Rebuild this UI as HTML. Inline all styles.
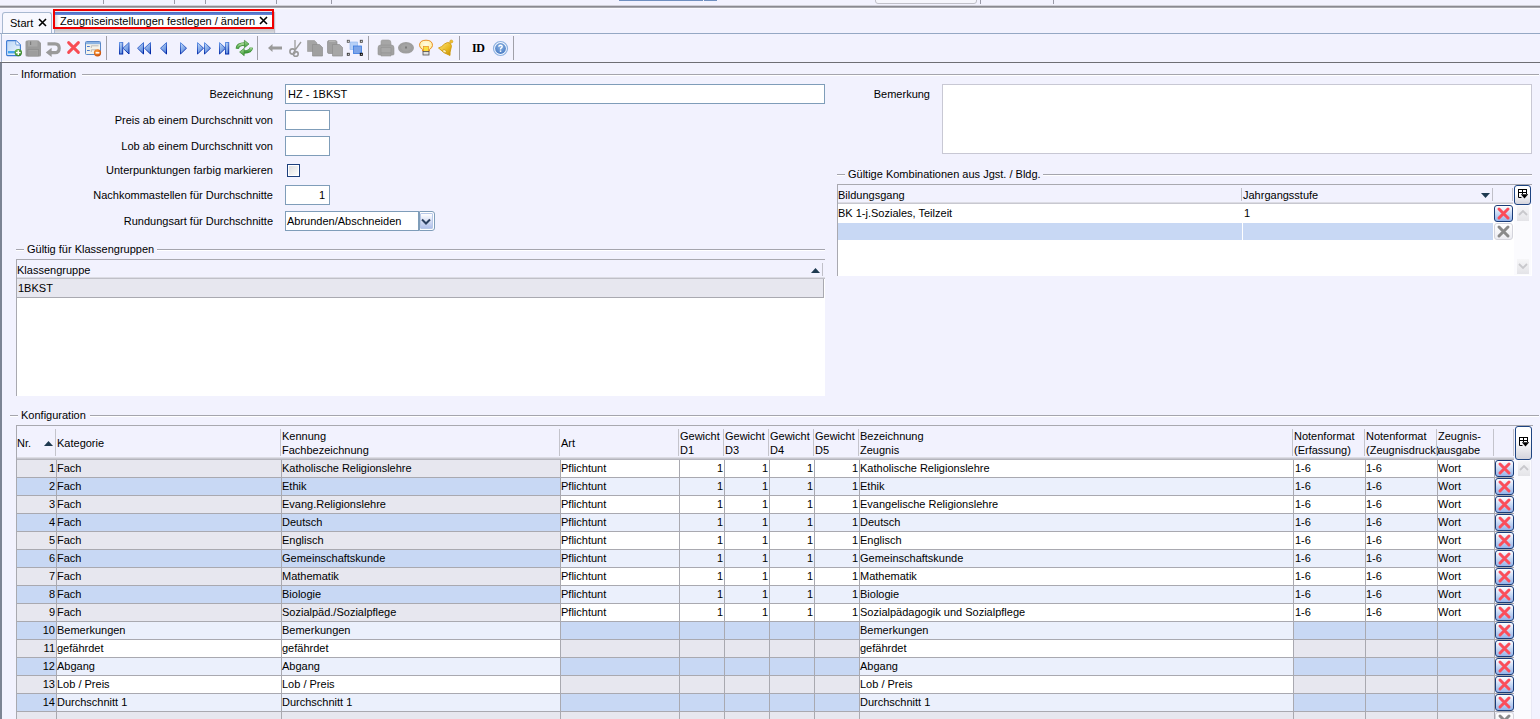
<!DOCTYPE html>
<html><head><meta charset="utf-8"><style>
html,body{margin:0;padding:0;width:1540px;height:719px;overflow:hidden;background:#f2f2fe;}
body>div,body>span,body>svg{position:absolute;}
.t{position:absolute;font-family:"Liberation Sans",sans-serif;font-size:11px;line-height:13px;white-space:nowrap;color:#000000;}
</style></head><body>
<div style="left:103px;top:0px;width:1px;height:4px;background:#9a9aa8"></div>
<div style="left:174px;top:0px;width:1px;height:4px;background:#9a9aa8"></div>
<div style="left:205px;top:0px;width:1px;height:4px;background:#9a9aa8"></div>
<div style="left:276px;top:0px;width:1px;height:4px;background:#9a9aa8"></div>
<div style="left:331px;top:0px;width:1px;height:4px;background:#9a9aa8"></div>
<div style="left:980px;top:0px;width:1px;height:4px;background:#9a9aa8"></div>
<div style="left:1053px;top:0px;width:1px;height:4px;background:#9a9aa8"></div>
<div style="left:619px;top:0px;width:84px;height:1px;background:#7090c0"></div>
<div style="left:704px;top:0px;width:13px;height:1px;background:#7090c0"></div>
<div style="left:875px;top:-4px;width:100px;height:6px;border:1px solid #c0c0c8;border-radius:3px;background:#f6f6fc"></div>
<div style="left:0px;top:5px;width:1540px;height:1px;background:#d0d0d8"></div>
<div style="left:0px;top:6px;width:1540px;height:1px;background:#8a8a90"></div>
<div style="left:0px;top:7px;width:1540px;height:1px;background:#a8a8b0"></div>
<div style="left:0px;top:8px;width:1540px;height:1px;background:#fafafe"></div>
<div style="left:2px;top:12px;width:50px;height:22px;background:#f8f8fe;border:1px solid #a8b8d0;border-bottom:none;border-radius:3px 3px 0 0;box-sizing:border-box"></div>
<span class="t" style="left:10px;top:17px;">Start</span>
<div style="left:54px;top:12px;width:220px;height:22px;background:linear-gradient(#ffffff 0,#ffffff 72%,#c4c4c8 80%,#e4e4ea 100%);border-left:1px solid #a8b8d0;box-sizing:border-box;box-shadow:1px 0 1px rgba(0,0,0,.2)"></div>
<div style="left:55px;top:12px;width:217px;height:3px;background:linear-gradient(#4868c0,#6a8ad8)"></div>
<div style="left:55px;top:15px;width:4px;height:12px;background:linear-gradient(90deg,#d8d8dc,#ffffff)"></div>
<div style="left:53px;top:9px;width:221px;height:20px;border:2px solid #f00000;box-sizing:border-box"></div>
<span class="t" style="left:60px;top:15px;">Zeugniseinstellungen festlegen / ändern</span>
<svg style="left:38px;top:18px" width="9" height="9" viewBox="0 0 9 9"><path d="M1 1L8 8M8 1L1 8" stroke="#000" stroke-width="1.6"/></svg>
<svg style="left:259px;top:16px" width="9" height="9" viewBox="0 0 9 9"><path d="M1 1L8 8M8 1L1 8" stroke="#000" stroke-width="1.6"/></svg>
<div style="left:0px;top:33px;width:1540px;height:1px;background:#95a8c4"></div>
<div style="left:1px;top:34px;width:1539px;height:28px;background:#f2f2fe"></div>
<div style="left:1px;top:33px;width:1px;height:30px;background:#a8b8d0"></div>
<div style="left:2px;top:61px;width:518px;height:1px;background:#ffffff"></div>
<div style="left:2px;top:34px;width:518px;height:1px;background:#ffffff"></div>
<div style="left:0px;top:62px;width:1540px;height:1px;background:#6e6e74"></div>
<div style="left:106px;top:36px;width:1px;height:24px;background:#a0a0a8"></div>
<div style="left:257px;top:36px;width:1px;height:24px;background:#a0a0a8"></div>
<div style="left:368px;top:36px;width:1px;height:24px;background:#a0a0a8"></div>
<div style="left:459px;top:36px;width:1px;height:24px;background:#a0a0a8"></div>
<div style="left:513px;top:36px;width:1px;height:24px;background:#a0a0a8"></div>
<div style="left:0px;top:63px;width:2px;height:656px;background:#7c8494"></div>
<svg style="left:5px;top:39px" width="18" height="18" viewBox="0 0 18 18">
 <defs><linearGradient id="gdoc" x1="0" y1="0" x2="1" y2="1"><stop offset="0" stop-color="#bcd6f6"/><stop offset="1" stop-color="#f2f8fe"/></linearGradient>
 <radialGradient id="ggreen" cx=".4" cy=".35" r=".7"><stop offset="0" stop-color="#80cc64"/><stop offset="1" stop-color="#2a7a20"/></radialGradient></defs>
 <path d="M1.6 2.6Q1.6 1.6 2.6 1.6H11L15.4 6V15.6Q15.4 16.6 14.4 16.6H2.6Q1.6 16.6 1.6 15.6Z" fill="url(#gdoc)" stroke="#3c7ad4" stroke-width="1.1" stroke-linejoin="round"/>
 <path d="M10.8 1.8V5.2Q10.8 6 11.6 6H15.2" fill="#fff" stroke="#5a8ed8" stroke-width=".9"/>
 <rect x="3" y="12" width="7" height="2.4" fill="#44a4ee"/>
 <circle cx="13.3" cy="13.6" r="3.7" fill="url(#ggreen)"/>
 <path d="M13.3 11.3V15.9M11 13.6H15.6" stroke="#fff" stroke-width="1.4"/>
</svg>
<svg style="left:25px;top:40px" width="17" height="17" viewBox="0 0 17 17">
 <path d="M0.5 2Q0.5 0.5 2 0.5H13.5L16 3V15Q16 16.5 14.5 16.5H2Q0.5 16.5 0.5 15Z" fill="#9a9a9a"/>
 <rect x="3" y="0.5" width="9.5" height="6" fill="#a8a8a8"/>
 <rect x="5" y="1.5" width="1.2" height="3.5" fill="#7c7c7c"/>
 <rect x="3" y="9.5" width="10.5" height="6.5" fill="#a4a4a4" stroke="#8c8c8c" stroke-width=".7"/>
 <path d="M4 12H12.5M4 14H12.5" stroke="#929292" stroke-width=".7"/>
</svg>
<svg style="left:45px;top:41px" width="17" height="16" viewBox="0 0 17 16">
 <path d="M2.5 2.8H10Q14.2 2.8 14.2 7.2Q14.2 11.6 10 11.6H6" fill="none" stroke="#9a9a9a" stroke-width="3.2"/>
 <path d="M0.8 11.6L6.6 6.8V16Z" fill="#9a9a9a"/>
</svg>
<svg style="left:66px;top:40px" width="15" height="15" viewBox="0 0 15 15">
 <path d="M2.6 2.6L12.4 12.4M12.4 2.6L2.6 12.4" stroke="#f84c54" stroke-width="2.9" stroke-linecap="round"/>
</svg>
<svg style="left:84px;top:40px" width="18" height="18" viewBox="0 0 18 18">
 <defs><radialGradient id="gorg" cx=".4" cy=".35" r=".7"><stop offset="0" stop-color="#ffa040"/><stop offset="1" stop-color="#c84800"/></radialGradient></defs>
 <rect x="1.5" y="1.5" width="15" height="13" rx="1" fill="#f4f2ea" stroke="#5a88c8" stroke-width="1"/>
 <rect x="2" y="2" width="14" height="2.2" fill="#8ab2e2"/>
 <path d="M3 6.5H5.8M3 10.5H5.8" stroke="#4a7ad0" stroke-width="1.1"/>
 <path d="M7.3 8V5.8H14.5M7.3 12V9.8H12" fill="none" stroke="#b4b4b4" stroke-width=".9"/>
 <circle cx="13.5" cy="12.8" r="3.6" fill="url(#gorg)"/>
 <path d="M11.6 12.8H15.4" stroke="#fff" stroke-width="1.5"/>
</svg>
<svg style="left:118px;top:41px" width="52" height="15" viewBox="0 0 52 15">
 <defs><linearGradient id="gblue" x1="0" y1="0" x2=".6" y2="1"><stop offset="0" stop-color="#c4dcf8"/><stop offset="1" stop-color="#5a88dc"/></linearGradient>
 <linearGradient id="sblue" x1="0" y1="0" x2=".3" y2="1"><stop offset="0" stop-color="#6a9ae8"/><stop offset="1" stop-color="#0028a8"/></linearGradient></defs>
 <rect x="1.5" y="1.5" width="3.2" height="11.5" fill="url(#gblue)" stroke="url(#sblue)" stroke-width="1"/>
 <path d="M11 1.5V13L5 7.2Z" fill="url(#gblue)" stroke="url(#sblue)" stroke-width="1" stroke-linejoin="round"/>
 <path d="M25.5 1.5V13L19.5 7.2Z" fill="url(#gblue)" stroke="url(#sblue)" stroke-width="1" stroke-linejoin="round"/>
 <path d="M32.5 1.5V13L26.5 7.2Z" fill="url(#gblue)" stroke="url(#sblue)" stroke-width="1" stroke-linejoin="round"/>
 <path d="M48.5 1.5V13L42.5 7.2Z" fill="url(#gblue)" stroke="url(#sblue)" stroke-width="1" stroke-linejoin="round"/>
</svg>
<svg style="left:179px;top:41px" width="52" height="15" viewBox="0 0 52 15">
 <path d="M1.5 1.5V13L7.5 7.2Z" fill="url(#gblue)" stroke="url(#sblue)" stroke-width="1" stroke-linejoin="round"/>
 <path d="M18.5 1.5V13L24.5 7.2Z" fill="url(#gblue)" stroke="url(#sblue)" stroke-width="1" stroke-linejoin="round"/>
 <path d="M25.5 1.5V13L31.5 7.2Z" fill="url(#gblue)" stroke="url(#sblue)" stroke-width="1" stroke-linejoin="round"/>
 <path d="M40.5 1.5V13L46.5 7.2Z" fill="url(#gblue)" stroke="url(#sblue)" stroke-width="1" stroke-linejoin="round"/>
 <rect x="46.5" y="1.5" width="3.2" height="11.5" fill="url(#gblue)" stroke="url(#sblue)" stroke-width="1"/>
</svg>
<svg style="left:235px;top:39px" width="18" height="18" viewBox="0 0 18 18">
 <defs><linearGradient id="ggr" x1="0" y1="0" x2="0" y2="1"><stop offset="0" stop-color="#a8dc98"/><stop offset="1" stop-color="#3c9a3a"/></linearGradient></defs>
 <path d="M2.3 9.6Q2.6 5 9.8 5" fill="none" stroke="#3a8a30" stroke-width="3.4"/>
 <path d="M2.3 9.6Q2.6 5 9.8 5" fill="none" stroke="url(#ggr)" stroke-width="2.2"/>
 <path d="M9.4 1.3L14 5L9.4 8.7Z" fill="url(#ggr)" stroke="#3a8a30" stroke-width=".7" stroke-linejoin="round"/>
 <path d="M16.3 8.6Q16 13 8.8 13" fill="none" stroke="#3a8a30" stroke-width="3.4"/>
 <path d="M16.3 8.6Q16 13 8.8 13" fill="none" stroke="url(#ggr)" stroke-width="2.2"/>
 <path d="M9.2 9.3L4.6 13L9.2 16.7Z" fill="url(#ggr)" stroke="#3a8a30" stroke-width=".7" stroke-linejoin="round"/>
</svg>
<svg style="left:267px;top:43px" width="16" height="10" viewBox="0 0 16 10">
 <path d="M1 5L5.5 1V3.5H15V6.5H5.5V9Z" fill="#9a9a9a"/>
</svg>
<svg style="left:288px;top:39px" width="15" height="18" viewBox="0 0 15 18">
 <path d="M7 1V11M13 3L7.5 10.5" stroke="#9c9c9c" stroke-width="1.3" fill="none"/>
 <circle cx="4.5" cy="12.5" r="2.6" fill="none" stroke="#9a9a9a" stroke-width="1.6"/>
 <circle cx="7.8" cy="15" r="2.4" fill="none" stroke="#9a9a9a" stroke-width="1.6"/>
</svg>
<svg style="left:306px;top:39px" width="18" height="18" viewBox="0 0 18 18">
 <path d="M1.5 1.5H8.5L11 4V12.5H1.5Z" fill="#a4a4a4" stroke="#9a9a9a" stroke-width=".6"/>
 <path d="M6.5 5.5H13.5L16.5 8.5V17H6.5Z" fill="#a0a0a0" stroke="#8e8e8e" stroke-width=".7"/>
</svg>
<svg style="left:326px;top:39px" width="18" height="18" viewBox="0 0 18 18">
 <path d="M1.5 3Q1.5 1.5 3 1.5H9Q11 1.5 11 3V14.5H3Q1.5 14.5 1.5 13Z" fill="#a0a0a0" stroke="#8e8e8e" stroke-width=".7"/>
 <path d="M3 1.5H9.5V3H3Z" fill="#b4b4b4"/>
 <path d="M6.5 5.5H13.5L16.5 8.5V17H6.5Z" fill="#a6a6a6" stroke="#8e8e8e" stroke-width=".7"/>
</svg>
<svg style="left:346px;top:39px" width="18" height="18" viewBox="0 0 18 18">
 <rect x="4" y="3" width="7.5" height="7.5" fill="#b8d0f6" stroke="#8ab4f0" stroke-width=".6"/>
 <rect x="7.5" y="7" width="8" height="7.5" fill="#7ca4e8" stroke="#3a7ae0" stroke-width=".8"/>
 <rect x="1.3" y="1.3" width="2" height="2" fill="#fff" stroke="#555" stroke-width=".9"/>
 <rect x="14.3" y="1.3" width="2" height="2" fill="#fff" stroke="#444" stroke-width=".9"/>
 <rect x="1.3" y="14.3" width="2" height="2" fill="#fff" stroke="#333" stroke-width=".9"/>
 <rect x="14.3" y="14.3" width="2" height="2" fill="#fff" stroke="#000" stroke-width="1"/>
</svg>
<svg style="left:377px;top:39px" width="18" height="18" viewBox="0 0 18 18">
 <path d="M4 2.5Q4 1 5.5 1H11.5Q14 1 14 4V8H4Z" fill="#a6a6a6" stroke="#9a9a9a" stroke-width=".6"/>
 <path d="M1 9Q1 6 3.5 6H14.5Q17 6 17 9V15Q17 16 16 16H2Q1 16 1 15Z" fill="#a2a2a2" stroke="#969696" stroke-width=".6"/>
 <path d="M4 8.5H14V14H4Z" fill="#a8a8a8" stroke="#959595" stroke-width=".7"/>
 <path d="M4 14H14V17H4Z" fill="#a4a4a4" stroke="#959595" stroke-width=".6"/>
</svg>
<svg style="left:397px;top:41px" width="18" height="14" viewBox="0 0 18 14">
 <ellipse cx="9" cy="6.8" rx="8" ry="5.8" fill="#9e9e9e"/>
 <ellipse cx="9" cy="6.5" rx="5" ry="3.5" fill="#a4a4a4"/>
 <rect x="8" y="5.5" width="2" height="2" fill="#7a7a7a"/>
</svg>
<svg style="left:418px;top:39px" width="16" height="17" viewBox="0 0 16 17">
 <defs><radialGradient id="gbulb" cx=".5" cy=".4" r=".6"><stop offset="0" stop-color="#fffbe8"/><stop offset=".7" stop-color="#fff2b0"/><stop offset="1" stop-color="#f0c040"/></radialGradient></defs>
 <path d="M8 1.2Q14.5 1.2 14.5 6.5Q14.5 8.5 11.5 10.5V12H4.5V10.5Q1.5 8.5 1.5 6.5Q1.5 1.2 8 1.2Z" fill="url(#gbulb)" stroke="#e8902a" stroke-width="1"/>
 <rect x="5.5" y="7.5" width="5" height="5" fill="#f8e040" stroke="#e89020" stroke-width=".7"/>
 <rect x="5" y="12.5" width="6" height="3.5" fill="#e0e0e0" stroke="#505050" stroke-width=".8"/>
</svg>
<svg style="left:437px;top:39px" width="18" height="18" viewBox="0 0 18 18">
 <defs><linearGradient id="gbell" x1="0" y1="0" x2="1" y2="1"><stop offset="0" stop-color="#ffe680"/><stop offset=".6" stop-color="#e8b820"/><stop offset="1" stop-color="#c08a00"/></linearGradient></defs>
 <path d="M1.5 9Q5 8 7.5 5Q10.5 2.5 13 4Q15.5 6.5 13.8 10Q12.8 13 13 16.5Q7 14.5 1.5 9Z" fill="url(#gbell)" stroke="#d09a10" stroke-width=".9" stroke-linejoin="round"/>
 <circle cx="14.3" cy="2.5" r="1.5" fill="#f0c030" stroke="#d09a10" stroke-width=".6"/>
 <ellipse cx="7.5" cy="12.2" rx="2" ry="1.4" fill="#fff0b0" stroke="#b08000" stroke-width=".5" transform="rotate(35 7.5 12.2)"/>
</svg>
<span class="t" style="left:472px;top:41px;font-family:'Liberation Serif',serif;font-weight:bold;font-size:12px;line-height:14px;letter-spacing:-0.3px">ID</span>
<svg style="left:492px;top:40px" width="17" height="17" viewBox="0 0 17 17">
 <defs><radialGradient id="ghelp" cx=".5" cy=".35" r=".65"><stop offset="0" stop-color="#8cb4e4"/><stop offset="1" stop-color="#4a7cc4"/></radialGradient></defs>
 <circle cx="8.5" cy="8.5" r="7" fill="#f4f8ff" stroke="#8cb0e0" stroke-width="1.2"/>
 <circle cx="8.5" cy="8.5" r="5.4" fill="url(#ghelp)"/>
 <path d="M6.8 6.8Q6.8 5.2 8.5 5.2Q10.2 5.2 10.2 6.6Q10.2 7.5 9.2 8Q8.5 8.4 8.5 9.4" fill="none" stroke="#fff" stroke-width="1.4"/>
 <rect x="7.8" y="10.4" width="1.5" height="1.5" fill="#fff"/>
</svg>

<div style="left:10px;top:74px;width:8px;height:1px;background:#a5a5ad"></div>
<div style="left:10px;top:75px;width:8px;height:1px;background:#ffffff"></div>
<div style="left:82px;top:74px;width:1457px;height:1px;background:#a5a5ad"></div>
<div style="left:82px;top:75px;width:1457px;height:1px;background:#ffffff"></div>
<span class="t" style="left:21px;top:68px;">Information</span>
<span class="t" style="right:1267px;top:88px;">Bezeichnung</span>
<span class="t" style="right:1267px;top:114px;">Preis ab einem Durchschnitt von</span>
<span class="t" style="right:1267px;top:140px;">Lob ab einem Durchschnitt von</span>
<span class="t" style="right:1267px;top:164px;">Unterpunktungen farbig markieren</span>
<span class="t" style="right:1267px;top:189px;">Nachkommastellen für Durchschnitte</span>
<span class="t" style="right:1267px;top:215px;">Rundungsart für Durchschnitte</span>
<div style="left:285px;top:84px;width:540px;height:20px;background:#fff;border:1px solid #7f9db9;box-sizing:border-box"></div>
<span class="t" style="left:288px;top:88px;">HZ - 1BKST</span>
<div style="left:285px;top:110px;width:45px;height:20px;background:#fff;border:1px solid #7f9db9;box-sizing:border-box"></div>
<div style="left:285px;top:136px;width:45px;height:20px;background:#fff;border:1px solid #7f9db9;box-sizing:border-box"></div>
<div style="left:287px;top:164px;width:13px;height:13px;border:1px solid #1c3f7c;box-sizing:border-box;background:linear-gradient(135deg,#dcdcdc,#ffffff);box-shadow:inset 0 0 0 1px #fff"></div>
<div style="left:285px;top:185px;width:45px;height:20px;background:#fff;border:1px solid #7f9db9;box-sizing:border-box"></div>
<span class="t" style="right:1215px;top:189px;">1</span>
<div style="left:285px;top:211px;width:134px;height:20px;background:#fff;border:1px solid #7f9db9;box-sizing:border-box"></div>
<span class="t" style="left:287px;top:215px;">Abrunden/Abschneiden</span>
<div style="left:419px;top:211px;width:16px;height:20px;border:1px solid #7f9db9;border-radius:0 3px 3px 0;box-sizing:border-box;background:#fff"></div>
<div style="left:420px;top:213px;width:13px;height:16px;background:linear-gradient(#ffffff,#b0c0ea);border:1px solid #b8c8e8;box-sizing:border-box;border-radius:1px"></div>
<svg style="left:421px;top:218px" width="10" height="8" viewBox="0 0 10 8"><path d="M1 1.5L5 5.5L9 1.5" stroke="#2c4060" stroke-width="2" fill="none"/></svg>
<span class="t" style="right:610px;top:88px;">Bemerkung</span>
<div style="left:942px;top:84px;width:590px;height:70px;background:#fff;border:1px solid #c8c8d4;box-sizing:border-box"></div>
<div style="left:837px;top:174px;width:8px;height:1px;background:#a5a5ad"></div>
<div style="left:837px;top:175px;width:8px;height:1px;background:#ffffff"></div>
<div style="left:1043px;top:174px;width:489px;height:1px;background:#a5a5ad"></div>
<div style="left:1043px;top:175px;width:489px;height:1px;background:#ffffff"></div>
<span class="t" style="left:848px;top:168px;">Gültige Kombinationen aus Jgst. / Bldg.</span>
<div style="left:837px;top:184px;width:695px;height:92px;background:#fff"></div>
<div style="left:837px;top:184px;width:695px;height:1px;background:#a9a9b0"></div>
<div style="left:837px;top:184px;width:1px;height:92px;background:#a9a9b0"></div>
<div style="left:838px;top:185px;width:676px;height:18px;background:#f2f2fe"></div>
<div style="left:838px;top:203px;width:676px;height:1px;background:#c8c8d0"></div>
<div style="left:838px;top:202px;width:676px;height:1px;background:#dcdce4"></div>
<span class="t" style="left:838px;top:189px;">Bildungsgang</span>
<div style="left:1241px;top:188px;width:1px;height:13px;background:#c0c0c8"></div>
<span class="t" style="left:1243px;top:189px;">Jahrgangsstufe</span>
<div style="left:1492px;top:188px;width:1px;height:13px;background:#c0c0c8"></div>
<div style="left:1513px;top:185px;width:19px;height:19px;background:#f2f2fe"></div>
<div style="left:1512px;top:188px;width:1px;height:13px;background:#c0c0c8"></div>
<svg style="left:1481px;top:193px" width="9" height="5" viewBox="0 0 9 5"><path d="M0 0H9L4.5 5Z" fill="#1e3a50"/></svg>
<span class="t" style="left:838px;top:207px;">BK 1-j.Soziales, Teilzeit</span>
<span class="t" style="left:1244px;top:207px;">1</span>
<div style="left:838px;top:223px;width:655px;height:17px;background:#c8d8f4"></div>
<div style="left:1242px;top:223px;width:1px;height:17px;background:#ffffff"></div>
<div style="left:1514px;top:204px;width:17px;height:71px;background:#fbfbfe"></div>
<div style="left:16px;top:249px;width:8px;height:1px;background:#a5a5ad"></div>
<div style="left:16px;top:250px;width:8px;height:1px;background:#ffffff"></div>
<div style="left:157px;top:249px;width:668px;height:1px;background:#a5a5ad"></div>
<div style="left:157px;top:250px;width:668px;height:1px;background:#ffffff"></div>
<span class="t" style="left:27px;top:243px;">Gültig für Klassengruppen</span>
<div style="left:16px;top:259px;width:809px;height:137px;background:#fff"></div>
<div style="left:16px;top:259px;width:809px;height:1px;background:#a9a9b0"></div>
<div style="left:16px;top:259px;width:1px;height:137px;background:#a9a9b0"></div>
<div style="left:17px;top:260px;width:808px;height:18px;background:#f2f2fe"></div>
<div style="left:17px;top:277px;width:808px;height:1px;background:#dcdce4"></div>
<div style="left:17px;top:278px;width:808px;height:1px;background:#c0c0c8"></div>
<span class="t" style="left:17px;top:264px;">Klassengruppe</span>
<div style="left:822px;top:263px;width:1px;height:13px;background:#c0c0c8"></div>
<svg style="left:811px;top:268px" width="9" height="5" viewBox="0 0 9 5"><path d="M0 5H9L4.5 0Z" fill="#1e3a50"/></svg>
<div style="left:17px;top:279px;width:807px;height:19px;background:#e7e7ef;border-right:1px solid #a9a9b0;border-bottom:1px solid #a9a9b0;box-sizing:border-box"></div>
<span class="t" style="left:18px;top:282px;">1BKST</span>
<div style="left:10px;top:415px;width:8px;height:1px;background:#a5a5ad"></div>
<div style="left:10px;top:416px;width:8px;height:1px;background:#ffffff"></div>
<div style="left:90px;top:415px;width:1449px;height:1px;background:#a5a5ad"></div>
<div style="left:90px;top:416px;width:1449px;height:1px;background:#ffffff"></div>
<span class="t" style="left:21px;top:409px;">Konfiguration</span>
<div style="left:16px;top:425px;width:1517px;height:294px;background:#f2f2fe"></div>
<div style="left:16px;top:425px;width:1517px;height:1px;background:#a9a9b0"></div>
<div style="left:16px;top:425px;width:1px;height:294px;background:#a9a9b0"></div>
<div style="left:17px;top:457px;width:1497px;height:1px;background:#dcdce4"></div>
<div style="left:17px;top:458px;width:1497px;height:1px;background:#c8c8d0"></div>
<span class="t" style="left:17px;top:437px;">Nr.</span>
<span class="t" style="left:57px;top:437px;">Kategorie</span>
<span class="t" style="left:282px;top:430px;">Kennung</span>
<span class="t" style="left:282px;top:444px;">Fachbezeichnung</span>
<span class="t" style="left:561px;top:437px;">Art</span>
<span class="t" style="left:680px;top:430px;">Gewicht</span>
<span class="t" style="left:680px;top:444px;">D1</span>
<span class="t" style="left:725px;top:430px;">Gewicht</span>
<span class="t" style="left:725px;top:444px;">D3</span>
<span class="t" style="left:770px;top:430px;">Gewicht</span>
<span class="t" style="left:770px;top:444px;">D4</span>
<span class="t" style="left:815px;top:430px;">Gewicht</span>
<span class="t" style="left:815px;top:444px;">D5</span>
<span class="t" style="left:860px;top:430px;">Bezeichnung</span>
<span class="t" style="left:860px;top:444px;">Zeugnis</span>
<span class="t" style="left:1294px;top:430px;">Notenformat</span>
<span class="t" style="left:1294px;top:444px;">(Erfassung)</span>
<span class="t" style="left:1366px;top:430px;">Notenformat</span>
<span class="t" style="left:1366px;top:444px;">(Zeugnisdruck)</span>
<span class="t" style="left:1438px;top:430px;">Zeugnis-</span>
<span class="t" style="left:1438px;top:444px;">ausgabe</span>
<div style="left:55px;top:429px;width:1px;height:27px;background:#c4c4cc"></div>
<div style="left:280px;top:429px;width:1px;height:27px;background:#c4c4cc"></div>
<div style="left:559px;top:429px;width:1px;height:27px;background:#c4c4cc"></div>
<div style="left:678px;top:429px;width:1px;height:27px;background:#c4c4cc"></div>
<div style="left:723px;top:429px;width:1px;height:27px;background:#c4c4cc"></div>
<div style="left:768px;top:429px;width:1px;height:27px;background:#c4c4cc"></div>
<div style="left:813px;top:429px;width:1px;height:27px;background:#c4c4cc"></div>
<div style="left:858px;top:429px;width:1px;height:27px;background:#c4c4cc"></div>
<div style="left:1292px;top:429px;width:1px;height:27px;background:#c4c4cc"></div>
<div style="left:1364px;top:429px;width:1px;height:27px;background:#c4c4cc"></div>
<div style="left:1436px;top:429px;width:1px;height:27px;background:#c4c4cc"></div>
<div style="left:1493px;top:429px;width:1px;height:27px;background:#c4c4cc"></div>
<div style="left:1513px;top:429px;width:1px;height:27px;background:#c4c4cc"></div>
<svg style="left:44px;top:441px" width="9" height="5" viewBox="0 0 9 5"><path d="M0 5H9L4.5 0Z" fill="#1e3a50"/></svg>
<div style="left:17px;top:460px;width:39px;height:17px;background:#e7e7ef"></div>
<div style="left:57px;top:460px;width:224px;height:17px;background:#e7e7ef"></div>
<div style="left:282px;top:460px;width:278px;height:17px;background:#e7e7ef"></div>
<div style="left:561px;top:460px;width:118px;height:17px;background:#ffffff"></div>
<div style="left:680px;top:460px;width:44px;height:17px;background:#ffffff"></div>
<div style="left:725px;top:460px;width:44px;height:17px;background:#ffffff"></div>
<div style="left:770px;top:460px;width:44px;height:17px;background:#ffffff"></div>
<div style="left:815px;top:460px;width:44px;height:17px;background:#ffffff"></div>
<div style="left:860px;top:460px;width:433px;height:17px;background:#ffffff"></div>
<div style="left:1294px;top:460px;width:71px;height:17px;background:#ffffff"></div>
<div style="left:1366px;top:460px;width:71px;height:17px;background:#ffffff"></div>
<div style="left:1438px;top:460px;width:56px;height:17px;background:#ffffff"></div>
<div style="left:17px;top:477px;width:1498px;height:1px;background:#a9a9b0"></div>
<div style="left:56px;top:460px;width:1px;height:18px;background:#a9a9b0"></div>
<div style="left:281px;top:460px;width:1px;height:18px;background:#a9a9b0"></div>
<div style="left:560px;top:460px;width:1px;height:18px;background:#a9a9b0"></div>
<div style="left:679px;top:460px;width:1px;height:18px;background:#a9a9b0"></div>
<div style="left:724px;top:460px;width:1px;height:18px;background:#a9a9b0"></div>
<div style="left:769px;top:460px;width:1px;height:18px;background:#a9a9b0"></div>
<div style="left:814px;top:460px;width:1px;height:18px;background:#a9a9b0"></div>
<div style="left:859px;top:460px;width:1px;height:18px;background:#a9a9b0"></div>
<div style="left:1293px;top:460px;width:1px;height:18px;background:#a9a9b0"></div>
<div style="left:1365px;top:460px;width:1px;height:18px;background:#a9a9b0"></div>
<div style="left:1437px;top:460px;width:1px;height:18px;background:#a9a9b0"></div>
<div style="left:1494px;top:460px;width:1px;height:18px;background:#a9a9b0"></div>
<span class="t" style="right:1485px;top:462px;">1</span>
<span class="t" style="left:57px;top:462px;">Fach</span>
<span class="t" style="left:282px;top:462px;">Katholische Religionslehre</span>
<span class="t" style="left:860px;top:462px;">Katholische Religionslehre</span>
<span class="t" style="left:561px;top:462px;">Pflichtunt</span>
<span class="t" style="right:817px;top:462px;">1</span>
<span class="t" style="right:772px;top:462px;">1</span>
<span class="t" style="right:727px;top:462px;">1</span>
<span class="t" style="right:682px;top:462px;">1</span>
<span class="t" style="left:1295px;top:462px;">1-6</span>
<span class="t" style="left:1366px;top:462px;">1-6</span>
<span class="t" style="left:1438px;top:462px;">Wort</span>
<div style="left:17px;top:478px;width:39px;height:17px;background:#c8d8f4"></div>
<div style="left:57px;top:478px;width:224px;height:17px;background:#c8d8f4"></div>
<div style="left:282px;top:478px;width:278px;height:17px;background:#c8d8f4"></div>
<div style="left:561px;top:478px;width:118px;height:17px;background:#ebf0fc"></div>
<div style="left:680px;top:478px;width:44px;height:17px;background:#ebf0fc"></div>
<div style="left:725px;top:478px;width:44px;height:17px;background:#ebf0fc"></div>
<div style="left:770px;top:478px;width:44px;height:17px;background:#ebf0fc"></div>
<div style="left:815px;top:478px;width:44px;height:17px;background:#ebf0fc"></div>
<div style="left:860px;top:478px;width:433px;height:17px;background:#ebf0fc"></div>
<div style="left:1294px;top:478px;width:71px;height:17px;background:#ebf0fc"></div>
<div style="left:1366px;top:478px;width:71px;height:17px;background:#ebf0fc"></div>
<div style="left:1438px;top:478px;width:56px;height:17px;background:#ebf0fc"></div>
<div style="left:17px;top:495px;width:1498px;height:1px;background:#a9a9b0"></div>
<div style="left:56px;top:478px;width:1px;height:18px;background:#a9a9b0"></div>
<div style="left:281px;top:478px;width:1px;height:18px;background:#a9a9b0"></div>
<div style="left:560px;top:478px;width:1px;height:18px;background:#a9a9b0"></div>
<div style="left:679px;top:478px;width:1px;height:18px;background:#a9a9b0"></div>
<div style="left:724px;top:478px;width:1px;height:18px;background:#a9a9b0"></div>
<div style="left:769px;top:478px;width:1px;height:18px;background:#a9a9b0"></div>
<div style="left:814px;top:478px;width:1px;height:18px;background:#a9a9b0"></div>
<div style="left:859px;top:478px;width:1px;height:18px;background:#a9a9b0"></div>
<div style="left:1293px;top:478px;width:1px;height:18px;background:#a9a9b0"></div>
<div style="left:1365px;top:478px;width:1px;height:18px;background:#a9a9b0"></div>
<div style="left:1437px;top:478px;width:1px;height:18px;background:#a9a9b0"></div>
<div style="left:1494px;top:478px;width:1px;height:18px;background:#a9a9b0"></div>
<span class="t" style="right:1485px;top:480px;">2</span>
<span class="t" style="left:57px;top:480px;">Fach</span>
<span class="t" style="left:282px;top:480px;">Ethik</span>
<span class="t" style="left:860px;top:480px;">Ethik</span>
<span class="t" style="left:561px;top:480px;">Pflichtunt</span>
<span class="t" style="right:817px;top:480px;">1</span>
<span class="t" style="right:772px;top:480px;">1</span>
<span class="t" style="right:727px;top:480px;">1</span>
<span class="t" style="right:682px;top:480px;">1</span>
<span class="t" style="left:1295px;top:480px;">1-6</span>
<span class="t" style="left:1366px;top:480px;">1-6</span>
<span class="t" style="left:1438px;top:480px;">Wort</span>
<div style="left:17px;top:496px;width:39px;height:17px;background:#e7e7ef"></div>
<div style="left:57px;top:496px;width:224px;height:17px;background:#e7e7ef"></div>
<div style="left:282px;top:496px;width:278px;height:17px;background:#e7e7ef"></div>
<div style="left:561px;top:496px;width:118px;height:17px;background:#ffffff"></div>
<div style="left:680px;top:496px;width:44px;height:17px;background:#ffffff"></div>
<div style="left:725px;top:496px;width:44px;height:17px;background:#ffffff"></div>
<div style="left:770px;top:496px;width:44px;height:17px;background:#ffffff"></div>
<div style="left:815px;top:496px;width:44px;height:17px;background:#ffffff"></div>
<div style="left:860px;top:496px;width:433px;height:17px;background:#ffffff"></div>
<div style="left:1294px;top:496px;width:71px;height:17px;background:#ffffff"></div>
<div style="left:1366px;top:496px;width:71px;height:17px;background:#ffffff"></div>
<div style="left:1438px;top:496px;width:56px;height:17px;background:#ffffff"></div>
<div style="left:17px;top:513px;width:1498px;height:1px;background:#a9a9b0"></div>
<div style="left:56px;top:496px;width:1px;height:18px;background:#a9a9b0"></div>
<div style="left:281px;top:496px;width:1px;height:18px;background:#a9a9b0"></div>
<div style="left:560px;top:496px;width:1px;height:18px;background:#a9a9b0"></div>
<div style="left:679px;top:496px;width:1px;height:18px;background:#a9a9b0"></div>
<div style="left:724px;top:496px;width:1px;height:18px;background:#a9a9b0"></div>
<div style="left:769px;top:496px;width:1px;height:18px;background:#a9a9b0"></div>
<div style="left:814px;top:496px;width:1px;height:18px;background:#a9a9b0"></div>
<div style="left:859px;top:496px;width:1px;height:18px;background:#a9a9b0"></div>
<div style="left:1293px;top:496px;width:1px;height:18px;background:#a9a9b0"></div>
<div style="left:1365px;top:496px;width:1px;height:18px;background:#a9a9b0"></div>
<div style="left:1437px;top:496px;width:1px;height:18px;background:#a9a9b0"></div>
<div style="left:1494px;top:496px;width:1px;height:18px;background:#a9a9b0"></div>
<span class="t" style="right:1485px;top:498px;">3</span>
<span class="t" style="left:57px;top:498px;">Fach</span>
<span class="t" style="left:282px;top:498px;">Evang.Religionslehre</span>
<span class="t" style="left:860px;top:498px;">Evangelische Religionslehre</span>
<span class="t" style="left:561px;top:498px;">Pflichtunt</span>
<span class="t" style="right:817px;top:498px;">1</span>
<span class="t" style="right:772px;top:498px;">1</span>
<span class="t" style="right:727px;top:498px;">1</span>
<span class="t" style="right:682px;top:498px;">1</span>
<span class="t" style="left:1295px;top:498px;">1-6</span>
<span class="t" style="left:1366px;top:498px;">1-6</span>
<span class="t" style="left:1438px;top:498px;">Wort</span>
<div style="left:17px;top:514px;width:39px;height:17px;background:#c8d8f4"></div>
<div style="left:57px;top:514px;width:224px;height:17px;background:#c8d8f4"></div>
<div style="left:282px;top:514px;width:278px;height:17px;background:#c8d8f4"></div>
<div style="left:561px;top:514px;width:118px;height:17px;background:#ebf0fc"></div>
<div style="left:680px;top:514px;width:44px;height:17px;background:#ebf0fc"></div>
<div style="left:725px;top:514px;width:44px;height:17px;background:#ebf0fc"></div>
<div style="left:770px;top:514px;width:44px;height:17px;background:#ebf0fc"></div>
<div style="left:815px;top:514px;width:44px;height:17px;background:#ebf0fc"></div>
<div style="left:860px;top:514px;width:433px;height:17px;background:#ebf0fc"></div>
<div style="left:1294px;top:514px;width:71px;height:17px;background:#ebf0fc"></div>
<div style="left:1366px;top:514px;width:71px;height:17px;background:#ebf0fc"></div>
<div style="left:1438px;top:514px;width:56px;height:17px;background:#ebf0fc"></div>
<div style="left:17px;top:531px;width:1498px;height:1px;background:#a9a9b0"></div>
<div style="left:56px;top:514px;width:1px;height:18px;background:#a9a9b0"></div>
<div style="left:281px;top:514px;width:1px;height:18px;background:#a9a9b0"></div>
<div style="left:560px;top:514px;width:1px;height:18px;background:#a9a9b0"></div>
<div style="left:679px;top:514px;width:1px;height:18px;background:#a9a9b0"></div>
<div style="left:724px;top:514px;width:1px;height:18px;background:#a9a9b0"></div>
<div style="left:769px;top:514px;width:1px;height:18px;background:#a9a9b0"></div>
<div style="left:814px;top:514px;width:1px;height:18px;background:#a9a9b0"></div>
<div style="left:859px;top:514px;width:1px;height:18px;background:#a9a9b0"></div>
<div style="left:1293px;top:514px;width:1px;height:18px;background:#a9a9b0"></div>
<div style="left:1365px;top:514px;width:1px;height:18px;background:#a9a9b0"></div>
<div style="left:1437px;top:514px;width:1px;height:18px;background:#a9a9b0"></div>
<div style="left:1494px;top:514px;width:1px;height:18px;background:#a9a9b0"></div>
<span class="t" style="right:1485px;top:516px;">4</span>
<span class="t" style="left:57px;top:516px;">Fach</span>
<span class="t" style="left:282px;top:516px;">Deutsch</span>
<span class="t" style="left:860px;top:516px;">Deutsch</span>
<span class="t" style="left:561px;top:516px;">Pflichtunt</span>
<span class="t" style="right:817px;top:516px;">1</span>
<span class="t" style="right:772px;top:516px;">1</span>
<span class="t" style="right:727px;top:516px;">1</span>
<span class="t" style="right:682px;top:516px;">1</span>
<span class="t" style="left:1295px;top:516px;">1-6</span>
<span class="t" style="left:1366px;top:516px;">1-6</span>
<span class="t" style="left:1438px;top:516px;">Wort</span>
<div style="left:17px;top:532px;width:39px;height:17px;background:#e7e7ef"></div>
<div style="left:57px;top:532px;width:224px;height:17px;background:#e7e7ef"></div>
<div style="left:282px;top:532px;width:278px;height:17px;background:#e7e7ef"></div>
<div style="left:561px;top:532px;width:118px;height:17px;background:#ffffff"></div>
<div style="left:680px;top:532px;width:44px;height:17px;background:#ffffff"></div>
<div style="left:725px;top:532px;width:44px;height:17px;background:#ffffff"></div>
<div style="left:770px;top:532px;width:44px;height:17px;background:#ffffff"></div>
<div style="left:815px;top:532px;width:44px;height:17px;background:#ffffff"></div>
<div style="left:860px;top:532px;width:433px;height:17px;background:#ffffff"></div>
<div style="left:1294px;top:532px;width:71px;height:17px;background:#ffffff"></div>
<div style="left:1366px;top:532px;width:71px;height:17px;background:#ffffff"></div>
<div style="left:1438px;top:532px;width:56px;height:17px;background:#ffffff"></div>
<div style="left:17px;top:549px;width:1498px;height:1px;background:#a9a9b0"></div>
<div style="left:56px;top:532px;width:1px;height:18px;background:#a9a9b0"></div>
<div style="left:281px;top:532px;width:1px;height:18px;background:#a9a9b0"></div>
<div style="left:560px;top:532px;width:1px;height:18px;background:#a9a9b0"></div>
<div style="left:679px;top:532px;width:1px;height:18px;background:#a9a9b0"></div>
<div style="left:724px;top:532px;width:1px;height:18px;background:#a9a9b0"></div>
<div style="left:769px;top:532px;width:1px;height:18px;background:#a9a9b0"></div>
<div style="left:814px;top:532px;width:1px;height:18px;background:#a9a9b0"></div>
<div style="left:859px;top:532px;width:1px;height:18px;background:#a9a9b0"></div>
<div style="left:1293px;top:532px;width:1px;height:18px;background:#a9a9b0"></div>
<div style="left:1365px;top:532px;width:1px;height:18px;background:#a9a9b0"></div>
<div style="left:1437px;top:532px;width:1px;height:18px;background:#a9a9b0"></div>
<div style="left:1494px;top:532px;width:1px;height:18px;background:#a9a9b0"></div>
<span class="t" style="right:1485px;top:534px;">5</span>
<span class="t" style="left:57px;top:534px;">Fach</span>
<span class="t" style="left:282px;top:534px;">Englisch</span>
<span class="t" style="left:860px;top:534px;">Englisch</span>
<span class="t" style="left:561px;top:534px;">Pflichtunt</span>
<span class="t" style="right:817px;top:534px;">1</span>
<span class="t" style="right:772px;top:534px;">1</span>
<span class="t" style="right:727px;top:534px;">1</span>
<span class="t" style="right:682px;top:534px;">1</span>
<span class="t" style="left:1295px;top:534px;">1-6</span>
<span class="t" style="left:1366px;top:534px;">1-6</span>
<span class="t" style="left:1438px;top:534px;">Wort</span>
<div style="left:17px;top:550px;width:39px;height:17px;background:#c8d8f4"></div>
<div style="left:57px;top:550px;width:224px;height:17px;background:#c8d8f4"></div>
<div style="left:282px;top:550px;width:278px;height:17px;background:#c8d8f4"></div>
<div style="left:561px;top:550px;width:118px;height:17px;background:#ebf0fc"></div>
<div style="left:680px;top:550px;width:44px;height:17px;background:#ebf0fc"></div>
<div style="left:725px;top:550px;width:44px;height:17px;background:#ebf0fc"></div>
<div style="left:770px;top:550px;width:44px;height:17px;background:#ebf0fc"></div>
<div style="left:815px;top:550px;width:44px;height:17px;background:#ebf0fc"></div>
<div style="left:860px;top:550px;width:433px;height:17px;background:#ebf0fc"></div>
<div style="left:1294px;top:550px;width:71px;height:17px;background:#ebf0fc"></div>
<div style="left:1366px;top:550px;width:71px;height:17px;background:#ebf0fc"></div>
<div style="left:1438px;top:550px;width:56px;height:17px;background:#ebf0fc"></div>
<div style="left:17px;top:567px;width:1498px;height:1px;background:#a9a9b0"></div>
<div style="left:56px;top:550px;width:1px;height:18px;background:#a9a9b0"></div>
<div style="left:281px;top:550px;width:1px;height:18px;background:#a9a9b0"></div>
<div style="left:560px;top:550px;width:1px;height:18px;background:#a9a9b0"></div>
<div style="left:679px;top:550px;width:1px;height:18px;background:#a9a9b0"></div>
<div style="left:724px;top:550px;width:1px;height:18px;background:#a9a9b0"></div>
<div style="left:769px;top:550px;width:1px;height:18px;background:#a9a9b0"></div>
<div style="left:814px;top:550px;width:1px;height:18px;background:#a9a9b0"></div>
<div style="left:859px;top:550px;width:1px;height:18px;background:#a9a9b0"></div>
<div style="left:1293px;top:550px;width:1px;height:18px;background:#a9a9b0"></div>
<div style="left:1365px;top:550px;width:1px;height:18px;background:#a9a9b0"></div>
<div style="left:1437px;top:550px;width:1px;height:18px;background:#a9a9b0"></div>
<div style="left:1494px;top:550px;width:1px;height:18px;background:#a9a9b0"></div>
<span class="t" style="right:1485px;top:552px;">6</span>
<span class="t" style="left:57px;top:552px;">Fach</span>
<span class="t" style="left:282px;top:552px;">Gemeinschaftskunde</span>
<span class="t" style="left:860px;top:552px;">Gemeinschaftskunde</span>
<span class="t" style="left:561px;top:552px;">Pflichtunt</span>
<span class="t" style="right:817px;top:552px;">1</span>
<span class="t" style="right:772px;top:552px;">1</span>
<span class="t" style="right:727px;top:552px;">1</span>
<span class="t" style="right:682px;top:552px;">1</span>
<span class="t" style="left:1295px;top:552px;">1-6</span>
<span class="t" style="left:1366px;top:552px;">1-6</span>
<span class="t" style="left:1438px;top:552px;">Wort</span>
<div style="left:17px;top:568px;width:39px;height:17px;background:#e7e7ef"></div>
<div style="left:57px;top:568px;width:224px;height:17px;background:#e7e7ef"></div>
<div style="left:282px;top:568px;width:278px;height:17px;background:#e7e7ef"></div>
<div style="left:561px;top:568px;width:118px;height:17px;background:#ffffff"></div>
<div style="left:680px;top:568px;width:44px;height:17px;background:#ffffff"></div>
<div style="left:725px;top:568px;width:44px;height:17px;background:#ffffff"></div>
<div style="left:770px;top:568px;width:44px;height:17px;background:#ffffff"></div>
<div style="left:815px;top:568px;width:44px;height:17px;background:#ffffff"></div>
<div style="left:860px;top:568px;width:433px;height:17px;background:#ffffff"></div>
<div style="left:1294px;top:568px;width:71px;height:17px;background:#ffffff"></div>
<div style="left:1366px;top:568px;width:71px;height:17px;background:#ffffff"></div>
<div style="left:1438px;top:568px;width:56px;height:17px;background:#ffffff"></div>
<div style="left:17px;top:585px;width:1498px;height:1px;background:#a9a9b0"></div>
<div style="left:56px;top:568px;width:1px;height:18px;background:#a9a9b0"></div>
<div style="left:281px;top:568px;width:1px;height:18px;background:#a9a9b0"></div>
<div style="left:560px;top:568px;width:1px;height:18px;background:#a9a9b0"></div>
<div style="left:679px;top:568px;width:1px;height:18px;background:#a9a9b0"></div>
<div style="left:724px;top:568px;width:1px;height:18px;background:#a9a9b0"></div>
<div style="left:769px;top:568px;width:1px;height:18px;background:#a9a9b0"></div>
<div style="left:814px;top:568px;width:1px;height:18px;background:#a9a9b0"></div>
<div style="left:859px;top:568px;width:1px;height:18px;background:#a9a9b0"></div>
<div style="left:1293px;top:568px;width:1px;height:18px;background:#a9a9b0"></div>
<div style="left:1365px;top:568px;width:1px;height:18px;background:#a9a9b0"></div>
<div style="left:1437px;top:568px;width:1px;height:18px;background:#a9a9b0"></div>
<div style="left:1494px;top:568px;width:1px;height:18px;background:#a9a9b0"></div>
<span class="t" style="right:1485px;top:570px;">7</span>
<span class="t" style="left:57px;top:570px;">Fach</span>
<span class="t" style="left:282px;top:570px;">Mathematik</span>
<span class="t" style="left:860px;top:570px;">Mathematik</span>
<span class="t" style="left:561px;top:570px;">Pflichtunt</span>
<span class="t" style="right:817px;top:570px;">1</span>
<span class="t" style="right:772px;top:570px;">1</span>
<span class="t" style="right:727px;top:570px;">1</span>
<span class="t" style="right:682px;top:570px;">1</span>
<span class="t" style="left:1295px;top:570px;">1-6</span>
<span class="t" style="left:1366px;top:570px;">1-6</span>
<span class="t" style="left:1438px;top:570px;">Wort</span>
<div style="left:17px;top:586px;width:39px;height:17px;background:#c8d8f4"></div>
<div style="left:57px;top:586px;width:224px;height:17px;background:#c8d8f4"></div>
<div style="left:282px;top:586px;width:278px;height:17px;background:#c8d8f4"></div>
<div style="left:561px;top:586px;width:118px;height:17px;background:#ebf0fc"></div>
<div style="left:680px;top:586px;width:44px;height:17px;background:#ebf0fc"></div>
<div style="left:725px;top:586px;width:44px;height:17px;background:#ebf0fc"></div>
<div style="left:770px;top:586px;width:44px;height:17px;background:#ebf0fc"></div>
<div style="left:815px;top:586px;width:44px;height:17px;background:#ebf0fc"></div>
<div style="left:860px;top:586px;width:433px;height:17px;background:#ebf0fc"></div>
<div style="left:1294px;top:586px;width:71px;height:17px;background:#ebf0fc"></div>
<div style="left:1366px;top:586px;width:71px;height:17px;background:#ebf0fc"></div>
<div style="left:1438px;top:586px;width:56px;height:17px;background:#ebf0fc"></div>
<div style="left:17px;top:603px;width:1498px;height:1px;background:#a9a9b0"></div>
<div style="left:56px;top:586px;width:1px;height:18px;background:#a9a9b0"></div>
<div style="left:281px;top:586px;width:1px;height:18px;background:#a9a9b0"></div>
<div style="left:560px;top:586px;width:1px;height:18px;background:#a9a9b0"></div>
<div style="left:679px;top:586px;width:1px;height:18px;background:#a9a9b0"></div>
<div style="left:724px;top:586px;width:1px;height:18px;background:#a9a9b0"></div>
<div style="left:769px;top:586px;width:1px;height:18px;background:#a9a9b0"></div>
<div style="left:814px;top:586px;width:1px;height:18px;background:#a9a9b0"></div>
<div style="left:859px;top:586px;width:1px;height:18px;background:#a9a9b0"></div>
<div style="left:1293px;top:586px;width:1px;height:18px;background:#a9a9b0"></div>
<div style="left:1365px;top:586px;width:1px;height:18px;background:#a9a9b0"></div>
<div style="left:1437px;top:586px;width:1px;height:18px;background:#a9a9b0"></div>
<div style="left:1494px;top:586px;width:1px;height:18px;background:#a9a9b0"></div>
<span class="t" style="right:1485px;top:588px;">8</span>
<span class="t" style="left:57px;top:588px;">Fach</span>
<span class="t" style="left:282px;top:588px;">Biologie</span>
<span class="t" style="left:860px;top:588px;">Biologie</span>
<span class="t" style="left:561px;top:588px;">Pflichtunt</span>
<span class="t" style="right:817px;top:588px;">1</span>
<span class="t" style="right:772px;top:588px;">1</span>
<span class="t" style="right:727px;top:588px;">1</span>
<span class="t" style="right:682px;top:588px;">1</span>
<span class="t" style="left:1295px;top:588px;">1-6</span>
<span class="t" style="left:1366px;top:588px;">1-6</span>
<span class="t" style="left:1438px;top:588px;">Wort</span>
<div style="left:17px;top:604px;width:39px;height:17px;background:#e7e7ef"></div>
<div style="left:57px;top:604px;width:224px;height:17px;background:#e7e7ef"></div>
<div style="left:282px;top:604px;width:278px;height:17px;background:#e7e7ef"></div>
<div style="left:561px;top:604px;width:118px;height:17px;background:#ffffff"></div>
<div style="left:680px;top:604px;width:44px;height:17px;background:#ffffff"></div>
<div style="left:725px;top:604px;width:44px;height:17px;background:#ffffff"></div>
<div style="left:770px;top:604px;width:44px;height:17px;background:#ffffff"></div>
<div style="left:815px;top:604px;width:44px;height:17px;background:#ffffff"></div>
<div style="left:860px;top:604px;width:433px;height:17px;background:#ffffff"></div>
<div style="left:1294px;top:604px;width:71px;height:17px;background:#ffffff"></div>
<div style="left:1366px;top:604px;width:71px;height:17px;background:#ffffff"></div>
<div style="left:1438px;top:604px;width:56px;height:17px;background:#ffffff"></div>
<div style="left:17px;top:621px;width:1498px;height:1px;background:#a9a9b0"></div>
<div style="left:56px;top:604px;width:1px;height:18px;background:#a9a9b0"></div>
<div style="left:281px;top:604px;width:1px;height:18px;background:#a9a9b0"></div>
<div style="left:560px;top:604px;width:1px;height:18px;background:#a9a9b0"></div>
<div style="left:679px;top:604px;width:1px;height:18px;background:#a9a9b0"></div>
<div style="left:724px;top:604px;width:1px;height:18px;background:#a9a9b0"></div>
<div style="left:769px;top:604px;width:1px;height:18px;background:#a9a9b0"></div>
<div style="left:814px;top:604px;width:1px;height:18px;background:#a9a9b0"></div>
<div style="left:859px;top:604px;width:1px;height:18px;background:#a9a9b0"></div>
<div style="left:1293px;top:604px;width:1px;height:18px;background:#a9a9b0"></div>
<div style="left:1365px;top:604px;width:1px;height:18px;background:#a9a9b0"></div>
<div style="left:1437px;top:604px;width:1px;height:18px;background:#a9a9b0"></div>
<div style="left:1494px;top:604px;width:1px;height:18px;background:#a9a9b0"></div>
<span class="t" style="right:1485px;top:606px;">9</span>
<span class="t" style="left:57px;top:606px;">Fach</span>
<span class="t" style="left:282px;top:606px;">Sozialpäd./Sozialpflege</span>
<span class="t" style="left:860px;top:606px;">Sozialpädagogik und Sozialpflege</span>
<span class="t" style="left:561px;top:606px;">Pflichtunt</span>
<span class="t" style="right:817px;top:606px;">1</span>
<span class="t" style="right:772px;top:606px;">1</span>
<span class="t" style="right:727px;top:606px;">1</span>
<span class="t" style="right:682px;top:606px;">1</span>
<span class="t" style="left:1295px;top:606px;">1-6</span>
<span class="t" style="left:1366px;top:606px;">1-6</span>
<span class="t" style="left:1438px;top:606px;">Wort</span>
<div style="left:17px;top:622px;width:39px;height:17px;background:#c8d8f4"></div>
<div style="left:57px;top:622px;width:224px;height:17px;background:#ebf0fc"></div>
<div style="left:282px;top:622px;width:278px;height:17px;background:#ebf0fc"></div>
<div style="left:561px;top:622px;width:118px;height:17px;background:#c8d8f4"></div>
<div style="left:680px;top:622px;width:44px;height:17px;background:#c8d8f4"></div>
<div style="left:725px;top:622px;width:44px;height:17px;background:#c8d8f4"></div>
<div style="left:770px;top:622px;width:44px;height:17px;background:#c8d8f4"></div>
<div style="left:815px;top:622px;width:44px;height:17px;background:#c8d8f4"></div>
<div style="left:860px;top:622px;width:433px;height:17px;background:#ebf0fc"></div>
<div style="left:1294px;top:622px;width:71px;height:17px;background:#c8d8f4"></div>
<div style="left:1366px;top:622px;width:71px;height:17px;background:#c8d8f4"></div>
<div style="left:1438px;top:622px;width:56px;height:17px;background:#c8d8f4"></div>
<div style="left:17px;top:639px;width:1498px;height:1px;background:#a9a9b0"></div>
<div style="left:56px;top:622px;width:1px;height:18px;background:#a9a9b0"></div>
<div style="left:281px;top:622px;width:1px;height:18px;background:#a9a9b0"></div>
<div style="left:560px;top:622px;width:1px;height:18px;background:#a9a9b0"></div>
<div style="left:679px;top:622px;width:1px;height:18px;background:#a9a9b0"></div>
<div style="left:724px;top:622px;width:1px;height:18px;background:#a9a9b0"></div>
<div style="left:769px;top:622px;width:1px;height:18px;background:#a9a9b0"></div>
<div style="left:814px;top:622px;width:1px;height:18px;background:#a9a9b0"></div>
<div style="left:859px;top:622px;width:1px;height:18px;background:#a9a9b0"></div>
<div style="left:1293px;top:622px;width:1px;height:18px;background:#a9a9b0"></div>
<div style="left:1365px;top:622px;width:1px;height:18px;background:#a9a9b0"></div>
<div style="left:1437px;top:622px;width:1px;height:18px;background:#a9a9b0"></div>
<div style="left:1494px;top:622px;width:1px;height:18px;background:#a9a9b0"></div>
<span class="t" style="right:1485px;top:624px;">10</span>
<span class="t" style="left:57px;top:624px;">Bemerkungen</span>
<span class="t" style="left:282px;top:624px;">Bemerkungen</span>
<span class="t" style="left:860px;top:624px;">Bemerkungen</span>
<div style="left:17px;top:640px;width:39px;height:17px;background:#e7e7ef"></div>
<div style="left:57px;top:640px;width:224px;height:17px;background:#ffffff"></div>
<div style="left:282px;top:640px;width:278px;height:17px;background:#ffffff"></div>
<div style="left:561px;top:640px;width:118px;height:17px;background:#e7e7ef"></div>
<div style="left:680px;top:640px;width:44px;height:17px;background:#e7e7ef"></div>
<div style="left:725px;top:640px;width:44px;height:17px;background:#e7e7ef"></div>
<div style="left:770px;top:640px;width:44px;height:17px;background:#e7e7ef"></div>
<div style="left:815px;top:640px;width:44px;height:17px;background:#e7e7ef"></div>
<div style="left:860px;top:640px;width:433px;height:17px;background:#ffffff"></div>
<div style="left:1294px;top:640px;width:71px;height:17px;background:#e7e7ef"></div>
<div style="left:1366px;top:640px;width:71px;height:17px;background:#e7e7ef"></div>
<div style="left:1438px;top:640px;width:56px;height:17px;background:#e7e7ef"></div>
<div style="left:17px;top:657px;width:1498px;height:1px;background:#a9a9b0"></div>
<div style="left:56px;top:640px;width:1px;height:18px;background:#a9a9b0"></div>
<div style="left:281px;top:640px;width:1px;height:18px;background:#a9a9b0"></div>
<div style="left:560px;top:640px;width:1px;height:18px;background:#a9a9b0"></div>
<div style="left:679px;top:640px;width:1px;height:18px;background:#a9a9b0"></div>
<div style="left:724px;top:640px;width:1px;height:18px;background:#a9a9b0"></div>
<div style="left:769px;top:640px;width:1px;height:18px;background:#a9a9b0"></div>
<div style="left:814px;top:640px;width:1px;height:18px;background:#a9a9b0"></div>
<div style="left:859px;top:640px;width:1px;height:18px;background:#a9a9b0"></div>
<div style="left:1293px;top:640px;width:1px;height:18px;background:#a9a9b0"></div>
<div style="left:1365px;top:640px;width:1px;height:18px;background:#a9a9b0"></div>
<div style="left:1437px;top:640px;width:1px;height:18px;background:#a9a9b0"></div>
<div style="left:1494px;top:640px;width:1px;height:18px;background:#a9a9b0"></div>
<span class="t" style="right:1485px;top:642px;">11</span>
<span class="t" style="left:57px;top:642px;">gefährdet</span>
<span class="t" style="left:282px;top:642px;">gefährdet</span>
<span class="t" style="left:860px;top:642px;">gefährdet</span>
<div style="left:17px;top:658px;width:39px;height:17px;background:#c8d8f4"></div>
<div style="left:57px;top:658px;width:224px;height:17px;background:#ebf0fc"></div>
<div style="left:282px;top:658px;width:278px;height:17px;background:#ebf0fc"></div>
<div style="left:561px;top:658px;width:118px;height:17px;background:#c8d8f4"></div>
<div style="left:680px;top:658px;width:44px;height:17px;background:#c8d8f4"></div>
<div style="left:725px;top:658px;width:44px;height:17px;background:#c8d8f4"></div>
<div style="left:770px;top:658px;width:44px;height:17px;background:#c8d8f4"></div>
<div style="left:815px;top:658px;width:44px;height:17px;background:#c8d8f4"></div>
<div style="left:860px;top:658px;width:433px;height:17px;background:#ebf0fc"></div>
<div style="left:1294px;top:658px;width:71px;height:17px;background:#c8d8f4"></div>
<div style="left:1366px;top:658px;width:71px;height:17px;background:#c8d8f4"></div>
<div style="left:1438px;top:658px;width:56px;height:17px;background:#c8d8f4"></div>
<div style="left:17px;top:675px;width:1498px;height:1px;background:#a9a9b0"></div>
<div style="left:56px;top:658px;width:1px;height:18px;background:#a9a9b0"></div>
<div style="left:281px;top:658px;width:1px;height:18px;background:#a9a9b0"></div>
<div style="left:560px;top:658px;width:1px;height:18px;background:#a9a9b0"></div>
<div style="left:679px;top:658px;width:1px;height:18px;background:#a9a9b0"></div>
<div style="left:724px;top:658px;width:1px;height:18px;background:#a9a9b0"></div>
<div style="left:769px;top:658px;width:1px;height:18px;background:#a9a9b0"></div>
<div style="left:814px;top:658px;width:1px;height:18px;background:#a9a9b0"></div>
<div style="left:859px;top:658px;width:1px;height:18px;background:#a9a9b0"></div>
<div style="left:1293px;top:658px;width:1px;height:18px;background:#a9a9b0"></div>
<div style="left:1365px;top:658px;width:1px;height:18px;background:#a9a9b0"></div>
<div style="left:1437px;top:658px;width:1px;height:18px;background:#a9a9b0"></div>
<div style="left:1494px;top:658px;width:1px;height:18px;background:#a9a9b0"></div>
<span class="t" style="right:1485px;top:660px;">12</span>
<span class="t" style="left:57px;top:660px;">Abgang</span>
<span class="t" style="left:282px;top:660px;">Abgang</span>
<span class="t" style="left:860px;top:660px;">Abgang</span>
<div style="left:17px;top:676px;width:39px;height:17px;background:#e7e7ef"></div>
<div style="left:57px;top:676px;width:224px;height:17px;background:#ffffff"></div>
<div style="left:282px;top:676px;width:278px;height:17px;background:#ffffff"></div>
<div style="left:561px;top:676px;width:118px;height:17px;background:#e7e7ef"></div>
<div style="left:680px;top:676px;width:44px;height:17px;background:#e7e7ef"></div>
<div style="left:725px;top:676px;width:44px;height:17px;background:#e7e7ef"></div>
<div style="left:770px;top:676px;width:44px;height:17px;background:#e7e7ef"></div>
<div style="left:815px;top:676px;width:44px;height:17px;background:#e7e7ef"></div>
<div style="left:860px;top:676px;width:433px;height:17px;background:#ffffff"></div>
<div style="left:1294px;top:676px;width:71px;height:17px;background:#e7e7ef"></div>
<div style="left:1366px;top:676px;width:71px;height:17px;background:#e7e7ef"></div>
<div style="left:1438px;top:676px;width:56px;height:17px;background:#e7e7ef"></div>
<div style="left:17px;top:693px;width:1498px;height:1px;background:#a9a9b0"></div>
<div style="left:56px;top:676px;width:1px;height:18px;background:#a9a9b0"></div>
<div style="left:281px;top:676px;width:1px;height:18px;background:#a9a9b0"></div>
<div style="left:560px;top:676px;width:1px;height:18px;background:#a9a9b0"></div>
<div style="left:679px;top:676px;width:1px;height:18px;background:#a9a9b0"></div>
<div style="left:724px;top:676px;width:1px;height:18px;background:#a9a9b0"></div>
<div style="left:769px;top:676px;width:1px;height:18px;background:#a9a9b0"></div>
<div style="left:814px;top:676px;width:1px;height:18px;background:#a9a9b0"></div>
<div style="left:859px;top:676px;width:1px;height:18px;background:#a9a9b0"></div>
<div style="left:1293px;top:676px;width:1px;height:18px;background:#a9a9b0"></div>
<div style="left:1365px;top:676px;width:1px;height:18px;background:#a9a9b0"></div>
<div style="left:1437px;top:676px;width:1px;height:18px;background:#a9a9b0"></div>
<div style="left:1494px;top:676px;width:1px;height:18px;background:#a9a9b0"></div>
<span class="t" style="right:1485px;top:678px;">13</span>
<span class="t" style="left:57px;top:678px;">Lob / Preis</span>
<span class="t" style="left:282px;top:678px;">Lob / Preis</span>
<span class="t" style="left:860px;top:678px;">Lob / Preis</span>
<div style="left:17px;top:694px;width:39px;height:17px;background:#c8d8f4"></div>
<div style="left:57px;top:694px;width:224px;height:17px;background:#ebf0fc"></div>
<div style="left:282px;top:694px;width:278px;height:17px;background:#ebf0fc"></div>
<div style="left:561px;top:694px;width:118px;height:17px;background:#c8d8f4"></div>
<div style="left:680px;top:694px;width:44px;height:17px;background:#c8d8f4"></div>
<div style="left:725px;top:694px;width:44px;height:17px;background:#c8d8f4"></div>
<div style="left:770px;top:694px;width:44px;height:17px;background:#c8d8f4"></div>
<div style="left:815px;top:694px;width:44px;height:17px;background:#c8d8f4"></div>
<div style="left:860px;top:694px;width:433px;height:17px;background:#ebf0fc"></div>
<div style="left:1294px;top:694px;width:71px;height:17px;background:#c8d8f4"></div>
<div style="left:1366px;top:694px;width:71px;height:17px;background:#c8d8f4"></div>
<div style="left:1438px;top:694px;width:56px;height:17px;background:#c8d8f4"></div>
<div style="left:17px;top:711px;width:1498px;height:1px;background:#a9a9b0"></div>
<div style="left:56px;top:694px;width:1px;height:18px;background:#a9a9b0"></div>
<div style="left:281px;top:694px;width:1px;height:18px;background:#a9a9b0"></div>
<div style="left:560px;top:694px;width:1px;height:18px;background:#a9a9b0"></div>
<div style="left:679px;top:694px;width:1px;height:18px;background:#a9a9b0"></div>
<div style="left:724px;top:694px;width:1px;height:18px;background:#a9a9b0"></div>
<div style="left:769px;top:694px;width:1px;height:18px;background:#a9a9b0"></div>
<div style="left:814px;top:694px;width:1px;height:18px;background:#a9a9b0"></div>
<div style="left:859px;top:694px;width:1px;height:18px;background:#a9a9b0"></div>
<div style="left:1293px;top:694px;width:1px;height:18px;background:#a9a9b0"></div>
<div style="left:1365px;top:694px;width:1px;height:18px;background:#a9a9b0"></div>
<div style="left:1437px;top:694px;width:1px;height:18px;background:#a9a9b0"></div>
<div style="left:1494px;top:694px;width:1px;height:18px;background:#a9a9b0"></div>
<span class="t" style="right:1485px;top:696px;">14</span>
<span class="t" style="left:57px;top:696px;">Durchschnitt 1</span>
<span class="t" style="left:282px;top:696px;">Durchschnitt 1</span>
<span class="t" style="left:860px;top:696px;">Durchschnitt 1</span>
<div style="left:17px;top:712px;width:39px;height:17px;background:#e7e7ef"></div>
<div style="left:57px;top:712px;width:224px;height:17px;background:#e7e7ef"></div>
<div style="left:282px;top:712px;width:278px;height:17px;background:#e7e7ef"></div>
<div style="left:561px;top:712px;width:118px;height:17px;background:#e7e7ef"></div>
<div style="left:680px;top:712px;width:44px;height:17px;background:#e7e7ef"></div>
<div style="left:725px;top:712px;width:44px;height:17px;background:#e7e7ef"></div>
<div style="left:770px;top:712px;width:44px;height:17px;background:#e7e7ef"></div>
<div style="left:815px;top:712px;width:44px;height:17px;background:#e7e7ef"></div>
<div style="left:860px;top:712px;width:433px;height:17px;background:#e7e7ef"></div>
<div style="left:1294px;top:712px;width:71px;height:17px;background:#e7e7ef"></div>
<div style="left:1366px;top:712px;width:71px;height:17px;background:#e7e7ef"></div>
<div style="left:1438px;top:712px;width:56px;height:17px;background:#e7e7ef"></div>
<div style="left:17px;top:729px;width:1498px;height:1px;background:#a9a9b0"></div>
<div style="left:56px;top:712px;width:1px;height:18px;background:#a9a9b0"></div>
<div style="left:281px;top:712px;width:1px;height:18px;background:#a9a9b0"></div>
<div style="left:560px;top:712px;width:1px;height:18px;background:#a9a9b0"></div>
<div style="left:679px;top:712px;width:1px;height:18px;background:#a9a9b0"></div>
<div style="left:724px;top:712px;width:1px;height:18px;background:#a9a9b0"></div>
<div style="left:769px;top:712px;width:1px;height:18px;background:#a9a9b0"></div>
<div style="left:814px;top:712px;width:1px;height:18px;background:#a9a9b0"></div>
<div style="left:859px;top:712px;width:1px;height:18px;background:#a9a9b0"></div>
<div style="left:1293px;top:712px;width:1px;height:18px;background:#a9a9b0"></div>
<div style="left:1365px;top:712px;width:1px;height:18px;background:#a9a9b0"></div>
<div style="left:1437px;top:712px;width:1px;height:18px;background:#a9a9b0"></div>
<div style="left:1494px;top:712px;width:1px;height:18px;background:#a9a9b0"></div>
<div style="left:17px;top:459px;width:1497px;height:1px;background:#b4b4bc"></div>
<div style="left:1514px;top:460px;width:17px;height:259px;background:#fbfbfe"></div>
<div style="left:1531px;top:460px;width:1px;height:259px;background:#e8e8f4"></div>
<div style="left:1514px;top:185px;width:17px;height:20px;box-sizing:border-box;border:1.5px solid #1e4482;border-radius:3px;background:linear-gradient(#ffffff 40%,#d4d4dc)"></div>
<svg style="left:1517px;top:188px" width="11" height="12" viewBox="0 0 11 12"><path d="M1.5 1.5H9.5V6M1.5 1.5V9.5H4.5M1.5 4.5H9.5M5.5 1.5V6" fill="none" stroke="#000" stroke-width="1"/><path d="M1 1H10V2H1Z" fill="#000"/><path d="M3.8 6.2H11.2L7.5 10.6Z" fill="#000"/></svg>
<div style="left:1494px;top:205px;width:19px;height:17px;box-sizing:border-box;border:1px solid #1a3c78;border-radius:3px;background:linear-gradient(#ffffff,#94b4ea)"></div>
<svg style="left:1494px;top:205px" width="19" height="17" viewBox="0 0 19 17"><path d="M5.0 4.0L14.0 13.0M14.0 4.0L5.0 13.0" stroke="#fb4d5a" stroke-width="3" stroke-linecap="round"/></svg>
<div style="left:1494px;top:223px;width:19px;height:17px;box-sizing:border-box;border:1px solid #d4d4dc;border-radius:3px;background:linear-gradient(#ffffff,#ececf2)"></div>
<svg style="left:1494px;top:223px" width="19" height="17" viewBox="0 0 19 17"><path d="M5.0 4.0L14.0 13.0M14.0 4.0L5.0 13.0" stroke="#8a8a8a" stroke-width="3" stroke-linecap="round"/></svg>
<div style="left:1517px;top:206px;width:12px;height:15px;background:linear-gradient(#f6f6f8,#e4e4e8)"></div>
<svg style="left:1517px;top:206px" width="12" height="15" viewBox="0 0 12 15"><path d="M2 9L6 5L10 9" fill="none" stroke="#c8c8cc" stroke-width="1.8"/></svg>
<div style="left:1517px;top:259px;width:12px;height:15px;background:linear-gradient(#f6f6f8,#e4e4e8)"></div>
<svg style="left:1517px;top:259px" width="12" height="15" viewBox="0 0 12 15"><path d="M2 5L6 9L10 5" fill="none" stroke="#c8c8cc" stroke-width="1.8"/></svg>
<div style="left:1515px;top:426px;width:17px;height:34px;box-sizing:border-box;border:1.5px solid #1e4482;border-radius:3px;background:linear-gradient(#ffffff 40%,#d4d4dc)"></div>
<svg style="left:1518px;top:436px" width="11" height="12" viewBox="0 0 11 12"><path d="M1.5 1.5H9.5V6M1.5 1.5V9.5H4.5M1.5 4.5H9.5M5.5 1.5V6" fill="none" stroke="#000" stroke-width="1"/><path d="M1 1H10V2H1Z" fill="#000"/><path d="M3.8 6.2H11.2L7.5 10.6Z" fill="#000"/></svg>
<div style="left:1495px;top:460px;width:19px;height:17px;box-sizing:border-box;border:1px solid #1a3c78;border-radius:3px;background:linear-gradient(#ffffff,#94b4ea)"></div>
<svg style="left:1495px;top:460px" width="19" height="17" viewBox="0 0 19 17"><path d="M5.0 4.0L14.0 13.0M14.0 4.0L5.0 13.0" stroke="#fb4d5a" stroke-width="3" stroke-linecap="round"/></svg>
<div style="left:1495px;top:478px;width:19px;height:17px;box-sizing:border-box;border:1px solid #1a3c78;border-radius:3px;background:linear-gradient(#ffffff,#94b4ea)"></div>
<svg style="left:1495px;top:478px" width="19" height="17" viewBox="0 0 19 17"><path d="M5.0 4.0L14.0 13.0M14.0 4.0L5.0 13.0" stroke="#fb4d5a" stroke-width="3" stroke-linecap="round"/></svg>
<div style="left:1495px;top:496px;width:19px;height:17px;box-sizing:border-box;border:1px solid #1a3c78;border-radius:3px;background:linear-gradient(#ffffff,#94b4ea)"></div>
<svg style="left:1495px;top:496px" width="19" height="17" viewBox="0 0 19 17"><path d="M5.0 4.0L14.0 13.0M14.0 4.0L5.0 13.0" stroke="#fb4d5a" stroke-width="3" stroke-linecap="round"/></svg>
<div style="left:1495px;top:514px;width:19px;height:17px;box-sizing:border-box;border:1px solid #1a3c78;border-radius:3px;background:linear-gradient(#ffffff,#94b4ea)"></div>
<svg style="left:1495px;top:514px" width="19" height="17" viewBox="0 0 19 17"><path d="M5.0 4.0L14.0 13.0M14.0 4.0L5.0 13.0" stroke="#fb4d5a" stroke-width="3" stroke-linecap="round"/></svg>
<div style="left:1495px;top:532px;width:19px;height:17px;box-sizing:border-box;border:1px solid #1a3c78;border-radius:3px;background:linear-gradient(#ffffff,#94b4ea)"></div>
<svg style="left:1495px;top:532px" width="19" height="17" viewBox="0 0 19 17"><path d="M5.0 4.0L14.0 13.0M14.0 4.0L5.0 13.0" stroke="#fb4d5a" stroke-width="3" stroke-linecap="round"/></svg>
<div style="left:1495px;top:550px;width:19px;height:17px;box-sizing:border-box;border:1px solid #1a3c78;border-radius:3px;background:linear-gradient(#ffffff,#94b4ea)"></div>
<svg style="left:1495px;top:550px" width="19" height="17" viewBox="0 0 19 17"><path d="M5.0 4.0L14.0 13.0M14.0 4.0L5.0 13.0" stroke="#fb4d5a" stroke-width="3" stroke-linecap="round"/></svg>
<div style="left:1495px;top:568px;width:19px;height:17px;box-sizing:border-box;border:1px solid #1a3c78;border-radius:3px;background:linear-gradient(#ffffff,#94b4ea)"></div>
<svg style="left:1495px;top:568px" width="19" height="17" viewBox="0 0 19 17"><path d="M5.0 4.0L14.0 13.0M14.0 4.0L5.0 13.0" stroke="#fb4d5a" stroke-width="3" stroke-linecap="round"/></svg>
<div style="left:1495px;top:586px;width:19px;height:17px;box-sizing:border-box;border:1px solid #1a3c78;border-radius:3px;background:linear-gradient(#ffffff,#94b4ea)"></div>
<svg style="left:1495px;top:586px" width="19" height="17" viewBox="0 0 19 17"><path d="M5.0 4.0L14.0 13.0M14.0 4.0L5.0 13.0" stroke="#fb4d5a" stroke-width="3" stroke-linecap="round"/></svg>
<div style="left:1495px;top:604px;width:19px;height:17px;box-sizing:border-box;border:1px solid #1a3c78;border-radius:3px;background:linear-gradient(#ffffff,#94b4ea)"></div>
<svg style="left:1495px;top:604px" width="19" height="17" viewBox="0 0 19 17"><path d="M5.0 4.0L14.0 13.0M14.0 4.0L5.0 13.0" stroke="#fb4d5a" stroke-width="3" stroke-linecap="round"/></svg>
<div style="left:1495px;top:622px;width:19px;height:17px;box-sizing:border-box;border:1px solid #1a3c78;border-radius:3px;background:linear-gradient(#ffffff,#94b4ea)"></div>
<svg style="left:1495px;top:622px" width="19" height="17" viewBox="0 0 19 17"><path d="M5.0 4.0L14.0 13.0M14.0 4.0L5.0 13.0" stroke="#fb4d5a" stroke-width="3" stroke-linecap="round"/></svg>
<div style="left:1495px;top:640px;width:19px;height:17px;box-sizing:border-box;border:1px solid #1a3c78;border-radius:3px;background:linear-gradient(#ffffff,#94b4ea)"></div>
<svg style="left:1495px;top:640px" width="19" height="17" viewBox="0 0 19 17"><path d="M5.0 4.0L14.0 13.0M14.0 4.0L5.0 13.0" stroke="#fb4d5a" stroke-width="3" stroke-linecap="round"/></svg>
<div style="left:1495px;top:658px;width:19px;height:17px;box-sizing:border-box;border:1px solid #1a3c78;border-radius:3px;background:linear-gradient(#ffffff,#94b4ea)"></div>
<svg style="left:1495px;top:658px" width="19" height="17" viewBox="0 0 19 17"><path d="M5.0 4.0L14.0 13.0M14.0 4.0L5.0 13.0" stroke="#fb4d5a" stroke-width="3" stroke-linecap="round"/></svg>
<div style="left:1495px;top:676px;width:19px;height:17px;box-sizing:border-box;border:1px solid #1a3c78;border-radius:3px;background:linear-gradient(#ffffff,#94b4ea)"></div>
<svg style="left:1495px;top:676px" width="19" height="17" viewBox="0 0 19 17"><path d="M5.0 4.0L14.0 13.0M14.0 4.0L5.0 13.0" stroke="#fb4d5a" stroke-width="3" stroke-linecap="round"/></svg>
<div style="left:1495px;top:694px;width:19px;height:17px;box-sizing:border-box;border:1px solid #1a3c78;border-radius:3px;background:linear-gradient(#ffffff,#94b4ea)"></div>
<svg style="left:1495px;top:694px" width="19" height="17" viewBox="0 0 19 17"><path d="M5.0 4.0L14.0 13.0M14.0 4.0L5.0 13.0" stroke="#fb4d5a" stroke-width="3" stroke-linecap="round"/></svg>
<div style="left:1495px;top:712px;width:19px;height:17px;box-sizing:border-box;border:1px solid #d4d4dc;border-radius:3px;background:linear-gradient(#ffffff,#ececf2)"></div>
<svg style="left:1495px;top:712px" width="19" height="17" viewBox="0 0 19 17"><path d="M5.0 4.0L14.0 13.0M14.0 4.0L5.0 13.0" stroke="#8a8a8a" stroke-width="3" stroke-linecap="round"/></svg>
<div style="left:1518px;top:461px;width:12px;height:15px;background:linear-gradient(#f6f6f8,#e4e4e8)"></div>
<svg style="left:1518px;top:461px" width="12" height="15" viewBox="0 0 12 15"><path d="M2 9L6 5L10 9" fill="none" stroke="#c8c8cc" stroke-width="1.8"/></svg>
</body></html>
